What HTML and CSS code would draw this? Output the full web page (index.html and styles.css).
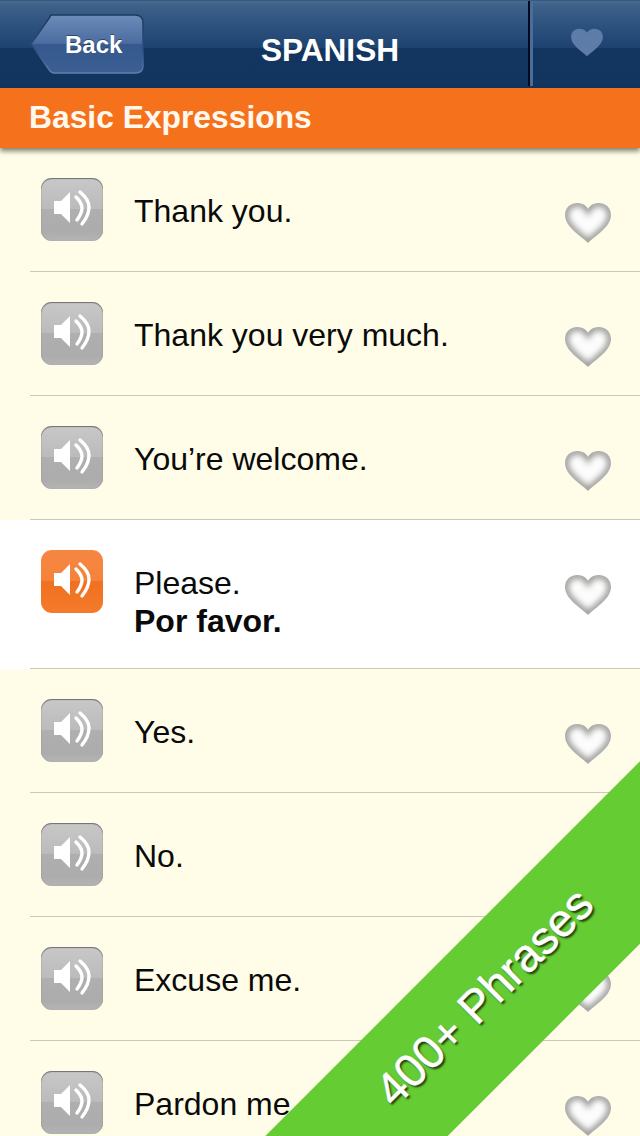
FILE: index.html
```html
<!DOCTYPE html>
<html lang="en">
<head>
  <meta charset="UTF-8">
  <meta name="viewport" content="width=device-width, initial-scale=1.0">
  <title>Spanish - Basic Expressions</title>
  <link rel="stylesheet" href="styles.css">
</head>
<body>
  <!-- Shared icons -->
  <svg class="icon-defs" aria-hidden="true">
    <defs>
      <filter id="heart-blur" x="-20%" y="-20%" width="140%" height="140%">
        <feGaussianBlur stdDeviation="3.2"/>
      </filter>
      <clipPath id="heart-clip">
        <path d="M24 41C16 33 1 25 1 13C1 5 7 1 13 1C18 1 22 3 24 7C26 3 30 1 35 1C41 1 47 5 47 13C47 25 32 33 24 41Z"/>
      </clipPath>
      <symbol id="heart" viewBox="0 0 48 42">
        <path fill="#fdfdfd" d="M24 41C16 33 1 25 1 13C1 5 7 1 13 1C18 1 22 3 24 7C26 3 30 1 35 1C41 1 47 5 47 13C47 25 32 33 24 41Z"/>
        <g clip-path="url(#heart-clip)">
          <path fill="none" stroke="#949492" stroke-width="7" filter="url(#heart-blur)" d="M24 41C16 33 1 25 1 13C1 5 7 1 13 1C18 1 22 3 24 7C26 3 30 1 35 1C41 1 47 5 47 13C47 25 32 33 24 41Z"/>
        </g>
      </symbol>
      <symbol id="speaker" viewBox="0 0 62 63">
        <path fill="#fff" d="M13 23H20L29 14V45L20 36H13Z"/>
        <path fill="none" stroke="#fff" stroke-width="3.4" stroke-linecap="round" d="M35 19C39 23 41 26 41 30C41 35 39 38 36 42"/>
        <path fill="none" stroke="#fff" stroke-width="3.4" stroke-linecap="round" d="M39 14C45 19 48 24 48 29C48 36 45 41 41 46"/>
      </symbol>
    </defs>
  </svg>

  <div class="screen">
    <header class="topbar">
      <a class="back-btn" href="#">
        <svg class="back-shape" viewBox="0 0 114 61" aria-hidden="true">
          <defs>
            <linearGradient id="back-fill" x1="0" y1="0" x2="0" y2="1">
              <stop offset="0%" stop-color="#6c8cba"/>
              <stop offset="49%" stop-color="#4a6c9f"/>
              <stop offset="50%" stop-color="#35598c"/>
              <stop offset="100%" stop-color="#3b5f92"/>
            </linearGradient>
            <linearGradient id="back-edge" x1="0" y1="0" x2="0" y2="1">
              <stop offset="0%" stop-color="#1c3a60"/>
              <stop offset="60%" stop-color="#2a4d7c"/>
              <stop offset="100%" stop-color="#5f80ab"/>
            </linearGradient>
          </defs>
          <path fill="url(#back-fill)" stroke="url(#back-edge)" stroke-width="1.5" d="M22 1H105C110 1 113 4 113 9V52C113 57 110 59 105 59H24C22 59 21 58 20 57L1 30L20 3C20 2 21 1 22 1Z"/>
        </svg>
        <span class="back-label">Back</span>
      </a>
      <h1 class="title">SPANISH</h1>
      <div class="fav-tab">
        <svg class="fav-heart" viewBox="0 0 48 42" aria-hidden="true">
          <path fill="#5d7da8" d="M24 41C16 33 1 25 1 13C1 5 7 1 13 1C18 1 22 3 24 7C26 3 30 1 35 1C41 1 47 5 47 13C47 25 32 33 24 41Z"/>
        </svg>
      </div>
    </header>

    <div class="section-bar">Basic Expressions</div>

    <ul class="phrases">
      <li class="phrase">
        <div class="phrase-inner">
          <span class="sound"><svg><use href="#speaker"/></svg></span>
          <div class="phrase-text">Thank you.</div>
          <svg class="heart"><use href="#heart"/></svg>
        </div>
      </li>
      <li class="phrase">
        <div class="phrase-inner">
          <span class="sound"><svg><use href="#speaker"/></svg></span>
          <div class="phrase-text">Thank you very much.</div>
          <svg class="heart"><use href="#heart"/></svg>
        </div>
      </li>
      <li class="phrase">
        <div class="phrase-inner">
          <span class="sound"><svg><use href="#speaker"/></svg></span>
          <div class="phrase-text">You’re welcome.</div>
          <svg class="heart"><use href="#heart"/></svg>
        </div>
      </li>
      <li class="phrase active">
        <div class="phrase-inner">
          <span class="sound"><svg><use href="#speaker"/></svg></span>
          <div class="phrase-text">Please.<br><strong>Por favor.</strong></div>
          <svg class="heart"><use href="#heart"/></svg>
        </div>
      </li>
      <li class="phrase">
        <div class="phrase-inner">
          <span class="sound"><svg><use href="#speaker"/></svg></span>
          <div class="phrase-text">Yes.</div>
          <svg class="heart"><use href="#heart"/></svg>
        </div>
      </li>
      <li class="phrase">
        <div class="phrase-inner">
          <span class="sound"><svg><use href="#speaker"/></svg></span>
          <div class="phrase-text">No.</div>
          <svg class="heart"><use href="#heart"/></svg>
        </div>
      </li>
      <li class="phrase">
        <div class="phrase-inner">
          <span class="sound"><svg><use href="#speaker"/></svg></span>
          <div class="phrase-text">Excuse me.</div>
          <svg class="heart"><use href="#heart"/></svg>
        </div>
      </li>
      <li class="phrase">
        <div class="phrase-inner">
          <span class="sound"><svg><use href="#speaker"/></svg></span>
          <div class="phrase-text">Pardon me.</div>
          <svg class="heart"><use href="#heart"/></svg>
        </div>
      </li>
    </ul>

    <div class="ribbon">400+ Phrases</div>
  </div>
</body>
</html>
```

FILE: styles.css
```css
body {
  margin: 0;
  font-family: "Liberation Sans", Arial, sans-serif;
  background: #fffde8;
}

.icon-defs {
  position: absolute;
  width: 0;
  height: 0;
}

.screen {
  position: relative;
  width: 640px;
  height: 1136px;
  overflow: hidden;
  background: #fffde8;
}

/* Barra superior */
.topbar {
  display: flex;
  align-items: stretch;
  height: 88px;
  background: linear-gradient(180deg, #2f5279 0%, #4a6c92 2%, #3f6288 5%, #2f5480 25%, #1e4370 54%, #12365f 55%, #11355f 100%);
}

.back-btn {
  position: relative;
  display: flex;
  align-items: center;
  width: 114px;
  height: 61px;
  margin: 14px 0 0 30px;
  padding-left: 35px;
  box-sizing: border-box;
  color: white;
  text-decoration: none;
}

.back-shape {
  position: absolute;
  top: 0;
  left: 0;
  width: 114px;
  height: 61px;
}

.back-label {
  position: relative;
  font-size: 24px;
  font-weight: bold;
  text-shadow: 0 -1px 0 rgba(0, 0, 0, 0.4);
}

.title {
  flex: 1;
  margin: 0;
  padding-right: 12px;
  padding-top: 13px;
  box-sizing: border-box;
  align-self: center;
  text-align: center;
  color: white;
  font-size: 31.6px;
  font-weight: bold;
}

.fav-tab {
  display: flex;
  justify-content: center;
  width: 112px;
  height: 85px;
  margin-top: 1px;
  padding-left: 3px;
  box-sizing: border-box;
  border-left: 2px solid #000a1c;
  box-shadow: inset 3px 0 0 #4a6d9c;
}

.fav-heart {
  width: 34px;
  height: 29px;
  margin-top: 27px;
}

.section-bar {
  position: relative;
  height: 60px;
  padding-left: 29px;
  line-height: 58px;
  background: #f6711b;
  color: #fff8ee;
  font-size: 31.8px;
  font-weight: bold;
  box-shadow: 0 3px 5px rgba(40, 40, 20, 0.6);
}

/* Lista de frases */
.phrases {
  margin: 0;
  padding: 0;
  list-style: none;
}

.phrase-inner {
  display: flex;
  align-items: flex-start;
  box-sizing: border-box;
  min-height: 124px;
  margin-left: 30px;
  border-bottom: 1px solid #cbc9b9;
}

.phrase.active {
  background: white;
}

.sound {
  flex: none;
  width: 62px;
  height: 63px;
  margin: 30px 0 0 11px;
  border-radius: 11px;
  background: linear-gradient(180deg, #c8c8c8 0%, #bbbbbb 49%, #afafaf 50%, #acacac 85%, #b4b4b4 100%);
  box-shadow: inset 0 1px 1px #6f6f6f, inset 0 0 1px #8c8c8c;
}

.sound svg {
  display: block;
  width: 62px;
  height: 63px;
}

.active .sound {
  background: linear-gradient(180deg, #f58743 0%, #f5823a 49%, #f0711f 50%, #f47a2c 100%);
  box-shadow: none;
}

.phrase-text {
  flex: 1;
  margin: 44px 0 28px 31px;
  font-size: 32px;
  line-height: 38px;
  color: #0a0a0a;
}

.heart {
  flex: none;
  width: 48px;
  height: 42px;
  margin: 54px 28px 0 0;
}

/* Faixa verde */
.ribbon {
  position: absolute;
  top: 884px;
  left: 194px;
  width: 700px;
  height: 129px;
  padding: 0 153px 17px 0;
  box-sizing: border-box;
  display: flex;
  align-items: center;
  justify-content: center;
  transform: rotate(-45deg);
  background: #65cc33;
  color: white;
  font-size: 46px;
  -webkit-text-stroke: 0.5px white;
  text-shadow: 0 3px 2px rgba(0, 0, 0, 0.7);
}
```
